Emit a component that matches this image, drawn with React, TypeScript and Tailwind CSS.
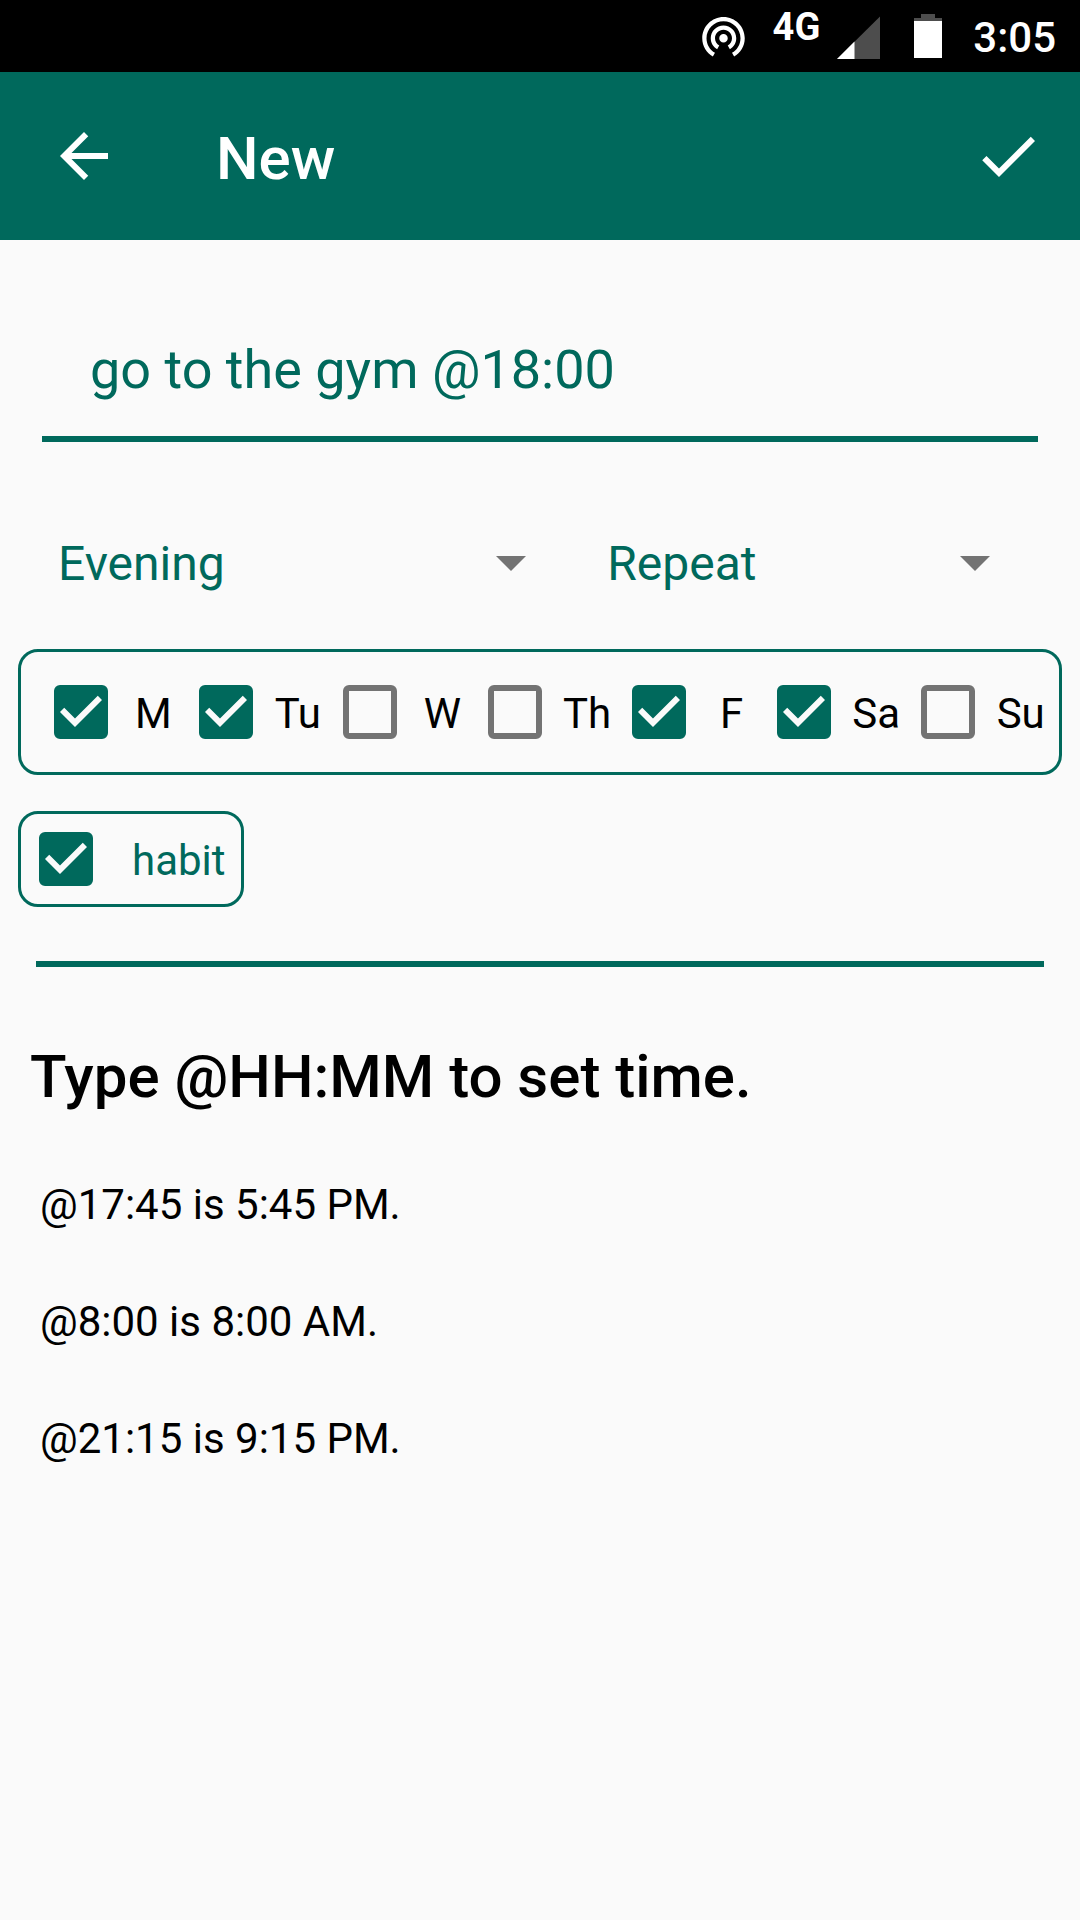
import { FC, ReactNode, useState } from 'react';

const DAYS = ['M', 'Tu', 'W', 'Th', 'F', 'Sa', 'Su'];

const EXAMPLES = ['@17:45 is 5:45 PM.', '@8:00 is 8:00 AM.', '@21:15 is 9:15 PM.'];

const StatusBar: FC = () => (
  <div className="flex h-[72px] justify-end bg-black pr-6 text-white">
    {/* Hotspot */}
    <svg className="mr-6 h-[72px] w-[51px]" viewBox="0 0 24 24" fill="currentColor">
      <path d="M12 11c-1.1 0-2 .9-2 2s.9 2 2 2 2-.9 2-2-.9-2-2-2zm6 2c0-3.31-2.69-6-6-6s-6 2.69-6 6c0 2.22 1.21 4.15 3 5.19l1-1.74c-1.19-.7-2-1.97-2-3.45 0-2.21 1.79-4 4-4s4 1.79 4 4c0 1.48-.81 2.75-2 3.45l1 1.74c1.79-1.04 3-2.97 3-5.19zM12 3C6.48 3 2 7.48 2 13c0 3.7 2.01 6.92 4.99 8.65l1-1.73C5.61 18.53 4 15.96 4 13c0-4.42 3.58-8 8-8s8 3.58 8 8c0 2.96-1.61 5.53-4 6.92l1 1.73c2.99-1.73 5-4.95 5-8.65 0-5.52-4.48-10-10-10z" />
    </svg>
    <span className="mr-4 text-[38px] leading-[54px] font-bold">4G</span>
    {/* Signal */}
    <svg className="mr-[34px] h-[72px] w-[44px]" viewBox="0 0 44 72">
      <path d="M44 16.5V59H1z" fill="#4d4d4d" />
      <path d="M18.5 41.5V59H1z" fill="#fff" />
    </svg>
    {/* Battery */}
    <svg className="mr-[31px] h-[72px] w-[28px]" viewBox="0 0 28 72">
      <path d="M7 14h14v4h7v3H0v-3h7z" fill="#4d4d4d" />
      <path d="M0 21h28v37H0z" fill="#fff" />
    </svg>
    <span className="text-[42px] leading-[76px] font-medium">3:05</span>
  </div>
);

interface CheckProps {
  checked: boolean;
  onChange: () => void;
}

const Check: FC<CheckProps> = ({ checked, onChange }) => (
  <span className="grid size-[54px] shrink-0">
    <input
      type="checkbox"
      checked={checked}
      onChange={onChange}
      className="col-start-1 row-start-1 size-[54px] appearance-none rounded-md border-6 border-[#737373] checked:border-[#00695c] checked:bg-[#00695c]"
    />
    {checked && (
      <svg
        className="pointer-events-none col-start-1 row-start-1 size-[54px]"
        viewBox="3 3 18 18"
        fill="#fafafa"
      >
        <path d="M10 17l-5-5 1.41-1.41L10 14.17l7.59-7.59L19 8z" />
      </svg>
    )}
  </span>
);

interface SpinnerProps {
  label: string;
  children: ReactNode;
}

const Spinner: FC<SpinnerProps> = ({ label, children }) => (
  <div className="grid">
    <select
      aria-label={label}
      className="col-start-1 row-start-1 h-[72px] w-full appearance-none bg-transparent pl-6 text-5xl leading-[72px] text-[#00695c] outline-none"
    >
      {children}
    </select>
    <svg
      className="pointer-events-none col-start-1 row-start-1 h-[68px] w-[72px] justify-self-end"
      viewBox="0 0 24 24"
      preserveAspectRatio="xMidYMid slice"
      fill="#737373"
    >
      <path d="M7 10l5 5 5-5z" />
    </svg>
  </div>
);

export default function App() {
  const [task, setTask] = useState('go to the gym @18:00');
  const [days, setDays] = useState(['M', 'Tu', 'F', 'Sa']);
  const [habit, setHabit] = useState(true);

  const toggleDay = (day: string) => {
    setDays(days.includes(day) ? days.filter((d) => d !== day) : [...days, day]);
  };

  return (
    <div className="min-h-screen bg-[#fafafa] font-['Roboto',sans-serif] text-black">
      <StatusBar />

      {/* Toolbar */}
      <header className="flex h-[168px] items-center bg-[#00695c] px-9 text-white">
        <button aria-label="Back" className="ml-3">
          <svg className="size-[72px]" viewBox="0 0 24 24" fill="currentColor">
            <path d="M20 11H7.83l5.59-5.59L12 4l-8 8 8 8 1.41-1.41L7.83 13H20v-2z" />
          </svg>
        </button>
        <h1 className="ml-24 flex-1 pt-1.5 text-6xl leading-[72px] font-medium">New</h1>
        <button aria-label="Save">
          <svg className="size-[72px]" viewBox="0 0 24 24" fill="currentColor">
            <path d="M9 16.17L4.83 12l-1.42 1.41L9 19 21 7l-1.41-1.41z" />
          </svg>
        </button>
      </header>

      <main>
        <div className="px-[42px] pt-[62px]">
          <input
            type="text"
            aria-label="Task"
            value={task}
            onChange={(e) => setTask(e.target.value)}
            className="h-[140px] w-full border-b-6 border-[#00695c] bg-transparent px-12 text-[54px] text-[#00695c] outline-none"
          />
        </div>

        <div className="mt-[86px] grid grid-cols-[6fr_5fr] gap-9 pr-[69px] pl-[34px]">
          <Spinner label="Time of day">
            <option>Evening</option>
            <option>Morning</option>
            <option>Afternoon</option>
          </Spinner>
          <Spinner label="Frequency">
            <option>Repeat</option>
            <option>Once</option>
          </Spinner>
        </div>

        {/* Weekdays */}
        <div className="mx-[18px] mt-[49px] grid h-[126px] grid-cols-7 items-center rounded-[20px] border-3 border-[#00695c] pr-[14px] pl-3">
          {DAYS.map((day) => (
            <label key={day} className="flex items-center pl-[21px] text-[42px] leading-[54px]">
              <Check checked={days.includes(day)} onChange={() => toggleDay(day)} />
              <span className="ml-[21px] flex-1 pt-1 text-center">{day}</span>
            </label>
          ))}
        </div>

        <label className="mx-[18px] mt-9 inline-flex h-24 items-center rounded-[20px] border-3 border-[#00695c] pr-[15px] pl-[18px] text-[42px] leading-[54px] text-[#00695c]">
          <Check checked={habit} onChange={() => setHabit(!habit)} />
          <span className="ml-[39px] pt-1">habit</span>
        </label>

        <hr className="mx-9 mt-[54px] border-t-6 border-[#00695c]" />

        {/* Help */}
        <section className="mt-[74px] px-[30px]">
          <h2 className="text-6xl leading-[72px] font-medium">Type @HH:MM to set time.</h2>
          <ul className="mt-[33px] px-[10px] text-[42px] leading-[117px]">
            {EXAMPLES.map((example) => (
              <li key={example}>{example}</li>
            ))}
          </ul>
        </section>
      </main>
    </div>
  );
}
